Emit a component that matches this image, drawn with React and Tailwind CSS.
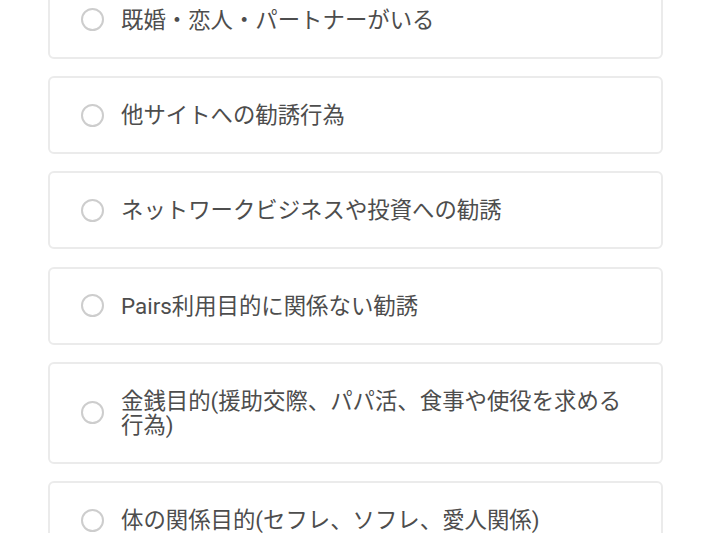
import React from "react";

const items = [
  "既婚・恋人・パートナーがいる",
  "他サイトへの勧誘行為",
  "ネットワークビジネスや投資への勧誘",
  "Pairs利用目的に関係ない勧誘",
  "金銭目的(援助交際、パパ活、食事や使役を求める行為)",
  "体の関係目的(セフレ、ソフレ、愛人関係)",
];

export default function App() {
  return (
    <div
      className="w-[710px] h-[533px] overflow-hidden bg-white"
      style={{ fontFamily: 'Roboto, "Noto Sans CJK JP", sans-serif' }}
    >
      <div className="flex flex-col gap-[17.33px] pl-[48px] pr-[47px] -mt-[19.33px]">
        {items.map((t, i) => (
          <label
            key={i}
            className="flex items-center border-2 border-[#ebebeb] rounded-[6px] py-[25px] pl-[31px] pr-[20px] bg-white"
          >
            <span className="shrink-0 w-[23px] h-[23px] rounded-full border-[2px] border-[#cdcdcd]" />
            <span className="ml-[17px] text-[22.4px] leading-[24px] text-[#4d4d4d]">
              {t}
            </span>
          </label>
        ))}
      </div>
    </div>
  );
}
